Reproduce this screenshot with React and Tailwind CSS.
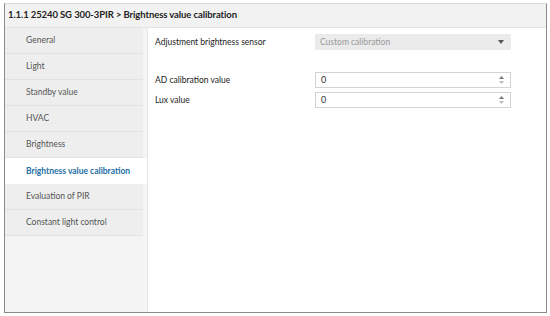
const items = [
  "General",
  "Light",
  "Standby value",
  "HVAC",
  "Brightness",
  "Brightness value calibration",
  "Evaluation of PIR",
  "Constant light control",
];

const Spinner = () => (
  <div className="flex flex-col items-center gap-[2px] pr-[6px]">
    <svg width="5" height="3" viewBox="0 0 5 3">
      <path d="M0 3 L2.5 0 L5 3 Z" fill="#777" />
    </svg>
    <svg width="5" height="3" viewBox="0 0 5 3">
      <path d="M0 0 L2.5 3 L5 0 Z" fill="#bbb" />
    </svg>
  </div>
);

const NumberField = ({ value }) => (
  <div className="w-[196px] h-[16px] border border-[#d4d4d4] bg-white flex items-center justify-between pl-[5px]">
    <span className="text-[9px] text-[#333]">{value}</span>
    <Spinner />
  </div>
);

export default function App() {
  const active = "Brightness value calibration";

  return (
    <div
      className="w-[550px] h-[316px] bg-white pt-[3px] pl-[4px] pr-[3px] pb-[3px]"
      style={{ fontFamily: 'Lato, "Noto Sans", sans-serif' }}
    >
      <div className="w-[543px] h-[310px] border-l border-b border-r border-[#8a8a8a] border-t-[#dcdcdc] border-t flex flex-col">
        <div className="h-[24px] bg-[#f2f2f2] border-b border-[#e4e4e4] flex items-center pl-[3px]">
          <span className="text-[9.5px] font-bold text-[#222] tracking-[-0.1px]">
            1.1.1 25240 SG 300-3PIR &gt; Brightness value calibration
          </span>
        </div>
        <div className="flex flex-1">
          <div className="w-[143px] bg-[#f4f4f4] border-r border-[#e6e6e6] flex flex-col">
            {items.map((it) =>
              it === active ? (
                <div
                  key={it}
                  className="h-[26px] bg-white flex items-center pl-[21px] text-[8.5px] font-bold text-[#1c6ea4]"
                >
                  {it}
                </div>
              ) : (
                <div
                  key={it}
                  className="h-[26px] bg-[#eeeeee] border-b border-[#e2e2e2] mr-[4px] flex items-center pl-[21px] text-[8.5px] text-[#555]"
                >
                  {it}
                </div>
              )
            )}
          </div>
          <div className="flex-1 bg-white pl-[7px] pt-[6px]">
            <div className="flex items-center h-[16px]">
              <span className="w-[160px] text-[8.5px] text-[#222]">Adjustment brightness sensor</span>
              <div className="w-[196px] h-[16px] bg-[#ebebeb] flex items-center justify-between pl-[5px] pr-[7px]">
                <span className="text-[8.5px] text-[#999]">Custom calibration</span>
                <svg width="6" height="4" viewBox="0 0 6 4">
                  <path d="M0 0 L6 0 L3 4 Z" fill="#555" />
                </svg>
              </div>
            </div>
            <div className="flex items-center h-[16px] mt-[22px]">
              <span className="w-[160px] text-[8.5px] text-[#222]">AD calibration value</span>
              <NumberField value="0" />
            </div>
            <div className="flex items-center h-[16px] mt-[4px]">
              <span className="w-[160px] text-[8.5px] text-[#222]">Lux value</span>
              <NumberField value="0" />
            </div>
          </div>
        </div>
      </div>
    </div>
  );
}
